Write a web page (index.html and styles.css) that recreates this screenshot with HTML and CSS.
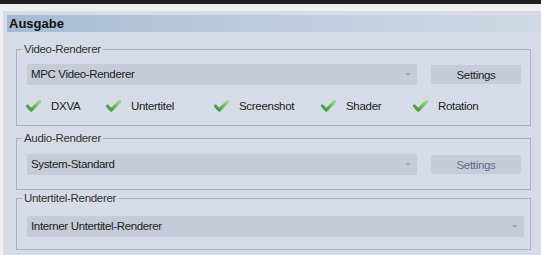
FILE: index.html
```html
<!DOCTYPE html>
<html lang="de">
<head>
    <meta charset="UTF-8">
    <title>Ausgabe</title>
    <link rel="stylesheet" href="styles.css">
</head>
<body>
    <div class="topbar"></div>
    <div class="panel">
        <div class="panel-header">Ausgabe</div>

        <fieldset class="group group-video">
            <legend>Video-Renderer</legend>
            <div class="row">
                <div class="combo">MPC Video-Renderer<span class="arrow"></span></div>
                <button class="btn">Settings</button>
            </div>
            <div class="checks">
                <div class="check"><svg class="tick" width="15" height="12" viewBox="0 0 15 12"><use href="#tick"/></svg>DXVA</div>
                <div class="check"><svg class="tick" width="15" height="12" viewBox="0 0 15 12"><use href="#tick"/></svg>Untertitel</div>
                <div class="check"><svg class="tick" width="15" height="12" viewBox="0 0 15 12"><use href="#tick"/></svg>Screenshot</div>
                <div class="check"><svg class="tick" width="15" height="12" viewBox="0 0 15 12"><use href="#tick"/></svg>Shader</div>
                <div class="check"><svg class="tick" width="15" height="12" viewBox="0 0 15 12"><use href="#tick"/></svg>Rotation</div>
            </div>
        </fieldset>

        <fieldset class="group group-audio">
            <legend>Audio-Renderer</legend>
            <div class="row">
                <div class="combo">System-Standard<span class="arrow"></span></div>
                <button class="btn" disabled>Settings</button>
            </div>
        </fieldset>

        <fieldset class="group group-sub">
            <legend>Untertitel-Renderer</legend>
            <div class="row">
                <div class="combo combo-wide">Interner Untertitel-Renderer<span class="arrow"></span></div>
            </div>
        </fieldset>
    </div>

    <svg width="0" height="0" style="position:absolute">
        <defs>
            <linearGradient id="tickGrad" x1="0" y1="1" x2="1" y2="0">
                <stop offset="0" stop-color="#3a933a"/>
                <stop offset="1" stop-color="#98da78"/>
            </linearGradient>
            <symbol id="tick" viewBox="0 0 15 12">
                <path d="M1.5 6 L5.2 10 L13.6 1.6" fill="none" stroke="url(#tickGrad)" stroke-width="3.2" stroke-linecap="round" stroke-linejoin="round"/>
            </symbol>
        </defs>
    </svg>
</body>
</html>
```

FILE: styles.css
```css
/* General Styles */
body {
    margin: 0;
    padding: 0;
    background-color: #f0f0f0;
    font-family: "Liberation Sans", Arial, sans-serif;
    font-size: 11.5px;
    color: #1b1b1b;
    overflow: hidden;
}

.topbar {
    height: 4px;
    background: #1e1e1e;
}

.panel {
    margin-top: 7px;
    margin-left: 3px;
    padding: 4px 0 10px 4px;
    background: #d6dce7;
    height: 240px;
}

.panel-header {
    height: 17px;
    line-height: 17px;
    padding-left: 2px;
    font-size: 13px;
    font-weight: bold;
    color: #111;
    background: linear-gradient(90deg, #a7bad5 0%, #bccbde 45%, #d0d8e4 100%);
}

/* Group boxes */
.group {
    margin: 0 10px 0 9px;
    padding: 8px 8px 11px 10px;
    border: 1px solid #a9b1be;
    min-width: 0;
}

.group legend {
    margin-left: -5px;
    padding: 0 2px;
    line-height: 14px;
    color: #333;
    letter-spacing: -0.3px;
}

.group-video {
    margin-top: 10px;
}

.group-audio {
    margin-top: 5px;
    padding-top: 9px;
    padding-bottom: 14px;
}

.group-sub {
    margin-top: 1px;
    padding-top: 11px;
    padding-bottom: 12px;
    padding-right: 6px;
}

.row {
    display: flex;
    align-items: center;
    gap: 14px;
}

.combo {
    position: relative;
    width: 390px;
    height: 21px;
    line-height: 21px;
    padding-left: 4px;
    box-sizing: border-box;
    background: #c5ccd8;
    border-radius: 2px;
    letter-spacing: -0.35px;
    color: #1b1b1b;
}

.combo-wide {
    width: 497px;
}

.arrow {
    position: absolute;
    right: 6px;
    top: 9px;
    width: 0;
    height: 0;
    border-left: 3.5px solid transparent;
    border-right: 3.5px solid transparent;
    border-top: 3px solid #86b8b3;
}

.btn {
    width: 90px;
    height: 19px;
    padding: 0;
    border: none;
    border-radius: 2px;
    background: #c6cdd9;
    font-family: inherit;
    font-size: 11.5px;
    color: #222;
    letter-spacing: -0.3px;
}

.btn:disabled {
    color: #5c6a8c;
}

/* Feature checks */
.checks {
    display: grid;
    grid-template-columns: 80px 108px 107px 92px auto;
    margin-top: 13px;
    margin-left: -1px;
    height: 16px;
}

.check {
    display: flex;
    align-items: center;
    gap: 10px;
    letter-spacing: -0.3px;
}

.tick {
    flex: none;
}
```
